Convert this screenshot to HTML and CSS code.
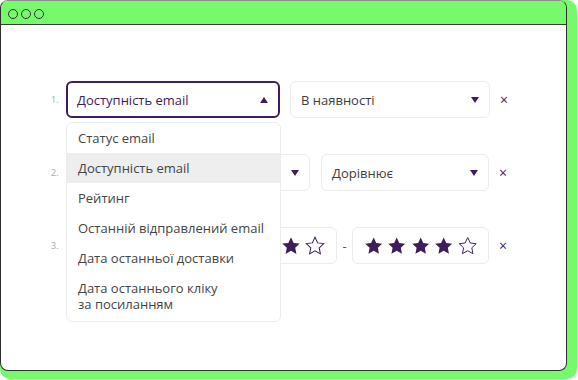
FILE: index.html
```html
<!DOCTYPE html>
<html lang="uk">

<head>
    <meta charset="UTF-8">
    <meta name="viewport" content="width=device-width, initial-scale=1.0">
    <title>Фільтри</title>
    <link rel="stylesheet" href="styles.css">
</head>

<body>
    <div class="frame">
        <div class="window">
            <div class="titlebar">
                <span class="dot"></span>
                <span class="dot"></span>
                <span class="dot"></span>
            </div>
            <div class="content">
                <!-- рядок 1 -->
                <div class="row row-open">
                    <span class="num">1.</span>
                    <div class="field field-active w1">
                        <span class="label">Доступність email</span>
                        <span class="arrow up"></span>
                    </div>
                    <div class="field w2">
                        <span class="label">В наявності</span>
                        <span class="arrow"></span>
                    </div>
                    <span class="remove">×</span>

                    <ul class="menu">
                        <li>Статус email</li>
                        <li class="hover">Доступність email</li>
                        <li>Рейтинг</li>
                        <li>Останній відправлений email</li>
                        <li>Дата останньої доставки</li>
                        <li class="two-lines"><span>Дата останнього кліку</span><span>за посиланням</span></li>
                    </ul>
                </div>
                <!-- рядок 2 -->
                <div class="row">
                    <span class="num">2.</span>
                    <div class="field field-end w3">
                        <span class="arrow"></span>
                    </div>
                    <div class="field w4">
                        <span class="label">Дорівнює</span>
                        <span class="arrow"></span>
                    </div>
                    <span class="remove">×</span>
                </div>
                <!-- рядок 3 -->
                <div class="row">
                    <span class="num">3.</span>
                    <div class="field stars-box w5">
                        <svg class="star" viewBox="0 0 24 24"><path d="M12 2.5l2.9 6.1 6.6.8-4.9 4.6 1.3 6.6L12 17.3l-5.9 3.3 1.3-6.6-4.9-4.6 6.6-.8z"/></svg>
                        <svg class="star" viewBox="0 0 24 24"><path d="M12 2.5l2.9 6.1 6.6.8-4.9 4.6 1.3 6.6L12 17.3l-5.9 3.3 1.3-6.6-4.9-4.6 6.6-.8z"/></svg>
                        <svg class="star" viewBox="0 0 24 24"><path d="M12 2.5l2.9 6.1 6.6.8-4.9 4.6 1.3 6.6L12 17.3l-5.9 3.3 1.3-6.6-4.9-4.6 6.6-.8z"/></svg>
                        <svg class="star" viewBox="0 0 24 24"><path d="M12 2.5l2.9 6.1 6.6.8-4.9 4.6 1.3 6.6L12 17.3l-5.9 3.3 1.3-6.6-4.9-4.6 6.6-.8z"/></svg>
                        <svg class="star empty" viewBox="0 0 24 24"><path d="M12 2.5l2.9 6.1 6.6.8-4.9 4.6 1.3 6.6L12 17.3l-5.9 3.3 1.3-6.6-4.9-4.6 6.6-.8z"/></svg>
                    </div>
                    <span class="dash">-</span>
                    <div class="field stars-box w6">
                        <svg class="star" viewBox="0 0 24 24"><path d="M12 2.5l2.9 6.1 6.6.8-4.9 4.6 1.3 6.6L12 17.3l-5.9 3.3 1.3-6.6-4.9-4.6 6.6-.8z"/></svg>
                        <svg class="star" viewBox="0 0 24 24"><path d="M12 2.5l2.9 6.1 6.6.8-4.9 4.6 1.3 6.6L12 17.3l-5.9 3.3 1.3-6.6-4.9-4.6 6.6-.8z"/></svg>
                        <svg class="star" viewBox="0 0 24 24"><path d="M12 2.5l2.9 6.1 6.6.8-4.9 4.6 1.3 6.6L12 17.3l-5.9 3.3 1.3-6.6-4.9-4.6 6.6-.8z"/></svg>
                        <svg class="star" viewBox="0 0 24 24"><path d="M12 2.5l2.9 6.1 6.6.8-4.9 4.6 1.3 6.6L12 17.3l-5.9 3.3 1.3-6.6-4.9-4.6 6.6-.8z"/></svg>
                        <svg class="star empty" viewBox="0 0 24 24"><path d="M12 2.5l2.9 6.1 6.6.8-4.9 4.6 1.3 6.6L12 17.3l-5.9 3.3 1.3-6.6-4.9-4.6 6.6-.8z"/></svg>
                    </div>
                    <span class="remove">×</span>
                </div>
            </div>
        </div>
    </div>
</body>

</html>
```

FILE: styles.css
```css
* {
    margin: 0;
    padding: 0;
    box-sizing: border-box;
}

body {
    background: #fff;
    font-family: "Open Sans", "Noto Sans", sans-serif;
    color: #444;
}

ul {
    list-style: none;
}

.frame {
    width: 577px;
    height: 379px;
    background: #76f96a;
    border-radius: 10px;
}

.window {
    width: 567px;
    height: 371px;
    background: #fff;
    border: 1.5px solid #2e2e2e;
    border-top-color: #8a8a8a;
    border-radius: 8px;
    overflow: hidden;
}

.titlebar {
    height: 24px;
    background: #76f96a;
    border-bottom: 1.5px solid #3a3a3a;
    display: flex;
    align-items: center;
    gap: 3px;
    padding-left: 7px;
    padding-top: 2px;
}

.dot {
    width: 10px;
    height: 10px;
    border: 1.5px solid #333;
    border-radius: 50%;
}

.content {
    padding: 56px 0 0 48px;
    display: flex;
    flex-direction: column;
    gap: 36px;
}

.row {
    display: flex;
    align-items: center;
    height: 37px;
}

.row-open {
    position: relative;
}

.num {
    width: 17px;
    font-size: 9px;
    color: #a8a8a8;
    padding-left: 2px;
}

.field {
    height: 37px;
    border: 1px solid #ececec;
    border-radius: 6px;
    background: #fff;
    display: flex;
    align-items: center;
    justify-content: space-between;
    padding: 0 10px 0 10px;
    font-size: 13px;
    color: #3d3d3d;
    white-space: nowrap;
}

.field-end {
    justify-content: flex-end;
}

.field-active {
    border: 2px solid #3d1d5c;
    color: #3d1d5c;
    padding-left: 9px;
}

.w1 { width: 214px; margin-right: 10px; }
.w2 { width: 200px; }
.w3 { width: 244px; margin-right: 11px; }
.w4 { width: 168px; }
.w5 { width: 271px; }
.w6 { width: 137px; }

.arrow {
    width: 0;
    height: 0;
    border-left: 4px solid transparent;
    border-right: 4px solid transparent;
    border-top: 6px solid #3d1d5c;
}

.arrow.up {
    border-top: 0;
    border-bottom: 6px solid #3d1d5c;
}

.remove {
    margin-left: 10px;
    font-size: 14px;
    color: #3d1d5c;
}

.dash {
    width: 15px;
    text-align: center;
    color: #555;
    font-size: 13px;
}

.stars-box {
    justify-content: flex-end;
    gap: 2px;
    padding: 0 10px;
}

.star {
    width: 22px;
    height: 22px;
    fill: #3d1d5c;
}

.star.empty {
    fill: #fff;
    stroke: #3d1d5c;
    stroke-width: 1.1;
}

.menu {
    position: absolute;
    top: 41px;
    left: 17px;
    width: 215px;
    background: #fff;
    border: 1px solid #ececec;
    border-radius: 6px;
    z-index: 2;
    font-size: 13px;
    color: #444;
}

.menu li {
    padding: 0 11px;
    line-height: 30px;
    white-space: nowrap;
}

.menu li.two-lines {
    display: flex;
    flex-direction: column;
    line-height: 16px;
    padding-top: 7px;
    padding-bottom: 9px;
}
.menu li.two-lines span {
    height: 16px;
}

.menu li.hover {
    background: #eeeeee;
}
```
